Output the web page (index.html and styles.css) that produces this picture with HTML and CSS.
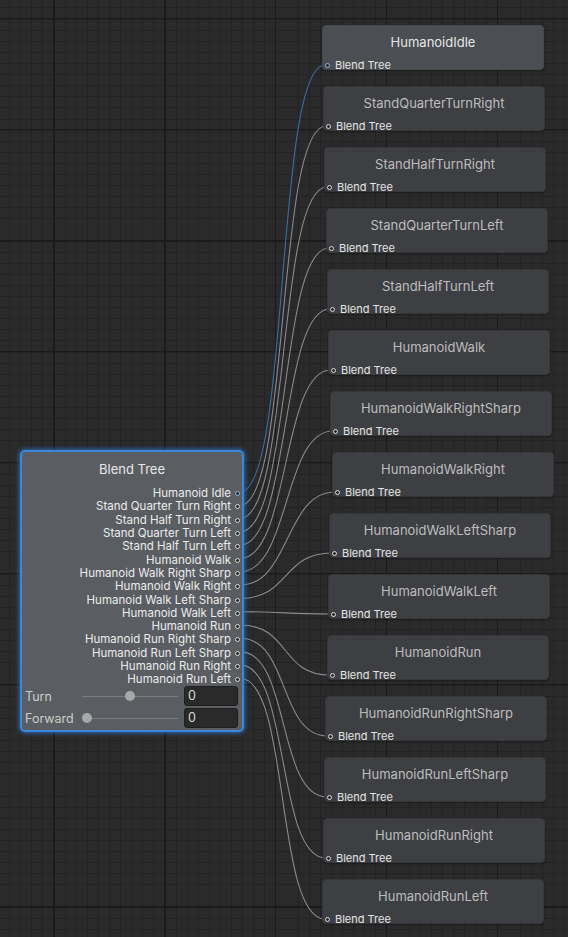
FILE: index.html
```html
<!DOCTYPE html>
<html>
<head>
<meta charset="utf-8">
<link rel="stylesheet" href="styles.css">
</head>
<body>
<div class="canvas">
  <svg class="edges" width="568" height="937" viewBox="0 0 568 937">
    <path class="edge active" d="M240 492 C290 492 275 65 325 65"/>
    <path class="edge" d="M240 505.3 C290 505.3 276 126 326 126"/>
    <path class="edge" d="M240 518.6 C290 518.6 277 187 327 187"/>
    <path class="edge" d="M240 531.9 C290 531.9 279 248 329 248"/>
    <path class="edge" d="M240 545.2 C290 545.2 280 309 330 309"/>
    <path class="edge" d="M240 558.5 C290 558.5 281 370 331 370"/>
    <path class="edge" d="M240 571.8 C290 571.8 283 431 333 431"/>
    <path class="edge" d="M240 585.1 C290 585.1 285 492 335 492"/>
    <path class="edge" d="M240 598.4 C290 598.4 282 553 332 553"/>
    <path class="edge" d="M240 611.7 C290 611.7 281 614 331 614"/>
    <path class="edge" d="M240 625 C290 625 280 675 330 675"/>
    <path class="edge" d="M240 638.3 C290 638.3 278 736 328 736"/>
    <path class="edge" d="M240 651.6 C290 651.6 277 797 327 797"/>
    <path class="edge" d="M240 664.9 C290 664.9 276 858 326 858"/>
    <path class="edge" d="M240 678.2 C290 678.2 275 919 325 919"/>
  </svg>

  <div class="blend">
    <div class="blend-title">Blend Tree</div>
    <div class="ports">
      <div class="port"><span>Humanoid Idle</span><i class="dot dot-blue"></i></div>
      <div class="port"><span>Stand Quarter Turn Right</span><i class="dot"></i></div>
      <div class="port"><span>Stand Half Turn Right</span><i class="dot"></i></div>
      <div class="port"><span>Stand Quarter Turn Left</span><i class="dot"></i></div>
      <div class="port"><span>Stand Half Turn Left</span><i class="dot"></i></div>
      <div class="port"><span>Humanoid Walk</span><i class="dot"></i></div>
      <div class="port"><span>Humanoid Walk Right Sharp</span><i class="dot"></i></div>
      <div class="port"><span>Humanoid Walk Right</span><i class="dot"></i></div>
      <div class="port"><span>Humanoid Walk Left Sharp</span><i class="dot"></i></div>
      <div class="port"><span>Humanoid Walk Left</span><i class="dot"></i></div>
      <div class="port"><span>Humanoid Run</span><i class="dot"></i></div>
      <div class="port"><span>Humanoid Run Right Sharp</span><i class="dot"></i></div>
      <div class="port"><span>Humanoid Run Left Sharp</span><i class="dot"></i></div>
      <div class="port"><span>Humanoid Run Right</span><i class="dot"></i></div>
      <div class="port"><span>Humanoid Run Left</span><i class="dot"></i></div>
    </div>
    <div class="param">
      <span class="param-label">Turn</span>
      <div class="slider"><div class="track"></div><div class="knob" style="left:43px"></div></div>
      <div class="field">0</div>
    </div>
    <div class="param">
      <span class="param-label">Forward</span>
      <div class="slider"><div class="track"></div><div class="knob" style="left:0px"></div></div>
      <div class="field">0</div>
    </div>
  </div>

  <div class="node node-active" style="left:322px;top:25px"><div class="node-title">HumanoidIdle</div><div class="node-port"><i class="dot dot-blue"></i><span>Blend Tree</span></div></div>
  <div class="node" style="left:323px;top:86px"><div class="node-title">StandQuarterTurnRight</div><div class="node-port"><i class="dot"></i><span>Blend Tree</span></div></div>
  <div class="node" style="left:324px;top:147px"><div class="node-title">StandHalfTurnRight</div><div class="node-port"><i class="dot"></i><span>Blend Tree</span></div></div>
  <div class="node" style="left:326px;top:208px"><div class="node-title">StandQuarterTurnLeft</div><div class="node-port"><i class="dot"></i><span>Blend Tree</span></div></div>
  <div class="node" style="left:327px;top:269px"><div class="node-title">StandHalfTurnLeft</div><div class="node-port"><i class="dot"></i><span>Blend Tree</span></div></div>
  <div class="node" style="left:328px;top:330px"><div class="node-title">HumanoidWalk</div><div class="node-port"><i class="dot"></i><span>Blend Tree</span></div></div>
  <div class="node" style="left:330px;top:391px"><div class="node-title">HumanoidWalkRightSharp</div><div class="node-port"><i class="dot"></i><span>Blend Tree</span></div></div>
  <div class="node" style="left:332px;top:452px"><div class="node-title">HumanoidWalkRight</div><div class="node-port"><i class="dot"></i><span>Blend Tree</span></div></div>
  <div class="node" style="left:329px;top:513px"><div class="node-title">HumanoidWalkLeftSharp</div><div class="node-port"><i class="dot"></i><span>Blend Tree</span></div></div>
  <div class="node" style="left:328px;top:574px"><div class="node-title">HumanoidWalkLeft</div><div class="node-port"><i class="dot"></i><span>Blend Tree</span></div></div>
  <div class="node" style="left:327px;top:635px"><div class="node-title">HumanoidRun</div><div class="node-port"><i class="dot"></i><span>Blend Tree</span></div></div>
  <div class="node" style="left:325px;top:696px"><div class="node-title">HumanoidRunRightSharp</div><div class="node-port"><i class="dot"></i><span>Blend Tree</span></div></div>
  <div class="node" style="left:324px;top:757px"><div class="node-title">HumanoidRunLeftSharp</div><div class="node-port"><i class="dot"></i><span>Blend Tree</span></div></div>
  <div class="node" style="left:323px;top:818px"><div class="node-title">HumanoidRunRight</div><div class="node-port"><i class="dot"></i><span>Blend Tree</span></div></div>
  <div class="node" style="left:322px;top:879px"><div class="node-title">HumanoidRunLeft</div><div class="node-port"><i class="dot"></i><span>Blend Tree</span></div></div>
</div>
</body>
</html>
```

FILE: styles.css
```css
* { box-sizing: border-box; }
html, body { margin: 0; padding: 0; background: #2a2a2a; }
body { font-family: Inter, "Noto Sans", sans-serif; }

.canvas {
  position: relative;
  width: 568px;
  height: 937px;
  overflow: hidden;
  background-color: #2a2a2a;
  background-image:
    repeating-linear-gradient(to right, transparent 0 53.5px, #1b1b1b 53.5px 54.5px, transparent 54.5px 111px),
    repeating-linear-gradient(to bottom, transparent 0 18.5px, #1b1b1b 18.5px 19.5px, transparent 19.5px 111px),
    repeating-linear-gradient(to right, transparent 0 9px, #232323 9px 10px, transparent 10px 11.1px),
    repeating-linear-gradient(to bottom, transparent 0 7.5px, #232323 7.5px 8.5px, transparent 8.5px 11.1px);
}

.edges { position: absolute; left: 0; top: 0; }
.edge { fill: none; stroke: #8a8a8a; stroke-width: 1.1; }
.edge.active { stroke: #3b6ea6; }

.dot {
  display: block;
  width: 5px;
  height: 5px;
  border-radius: 50%;
  border: 1px solid #dcdcdc;
  background: #2a2a2a;
  flex: none;
}
.dot-blue { border-color: #8fb7e0; }

/* Blend tree node */
.blend {
  position: absolute;
  left: 20px;
  top: 450px;
  width: 224px;
  height: 282px;
  border: 2px solid #3a86d8;
  border-radius: 5px;
  background: #5a5d62;
  box-shadow: 0 0 4px 1px rgba(45, 125, 220, 0.75);
  display: flex;
  flex-direction: column;
  color: #e6e6e6;
}
.blend-title {
  text-align: center;
  font-size: 13px;
  line-height: 16px;
  padding-top: 9px;
  margin-bottom: 10px;
  color: #e8e8e8;
}
.ports { display: flex; flex-direction: column; }
.port {
  height: 13.3px;
  display: flex;
  align-items: center;
  justify-content: flex-end;
  gap: 4px;
  padding-right: 2px;
  font-size: 11.5px;
  line-height: 13px;
  white-space: nowrap;
  color: #ececec;
}
.param {
  display: flex;
  align-items: center;
  height: 20px;
  margin-bottom: 2px;
  padding-left: 3px;
  padding-right: 4px;
}
.param-label {
  width: 57px;
  font-size: 12.5px;
  color: #cdcdcd;
}
.slider {
  position: relative;
  width: 96px;
  height: 20px;
}
.track {
  position: absolute;
  left: 0;
  right: 0;
  top: 9.5px;
  height: 1px;
  background: #7a7c80;
}
.knob {
  position: absolute;
  top: 5px;
  width: 10px;
  height: 10px;
  border-radius: 50%;
  background: #a8a8a8;
}
.field {
  width: 54px;
  height: 20px;
  margin-left: auto;
  background: #2a2a2a;
  border: 1px solid #1f1f1f;
  border-radius: 3px;
  font-size: 12.5px;
  line-height: 18px;
  padding-left: 3px;
  color: #d8d8d8;
}

/* State nodes */
.node {
  position: absolute;
  width: 222px;
  height: 45px;
  border-radius: 4px;
  background: #3d3f43;
  border: 1px solid #35373a;
  box-shadow: 0 1px 2px rgba(0, 0, 0, 0.35);
  display: flex;
  flex-direction: column;
}
.node-active { background: #4b4e52; border-color: #45484c; }
.node-title {
  text-align: center;
  font-size: 13px;
  line-height: 16px;
  padding-top: 8px;
  color: #bdbdbd;
}
.node-active .node-title { color: #e6e6e6; }
.node-port {
  display: flex;
  align-items: center;
  gap: 5px;
  margin-top: 9px;
  height: 12px;
  padding-left: 2px;
  font-size: 11px;
  color: #e4e4e4;
}
```
